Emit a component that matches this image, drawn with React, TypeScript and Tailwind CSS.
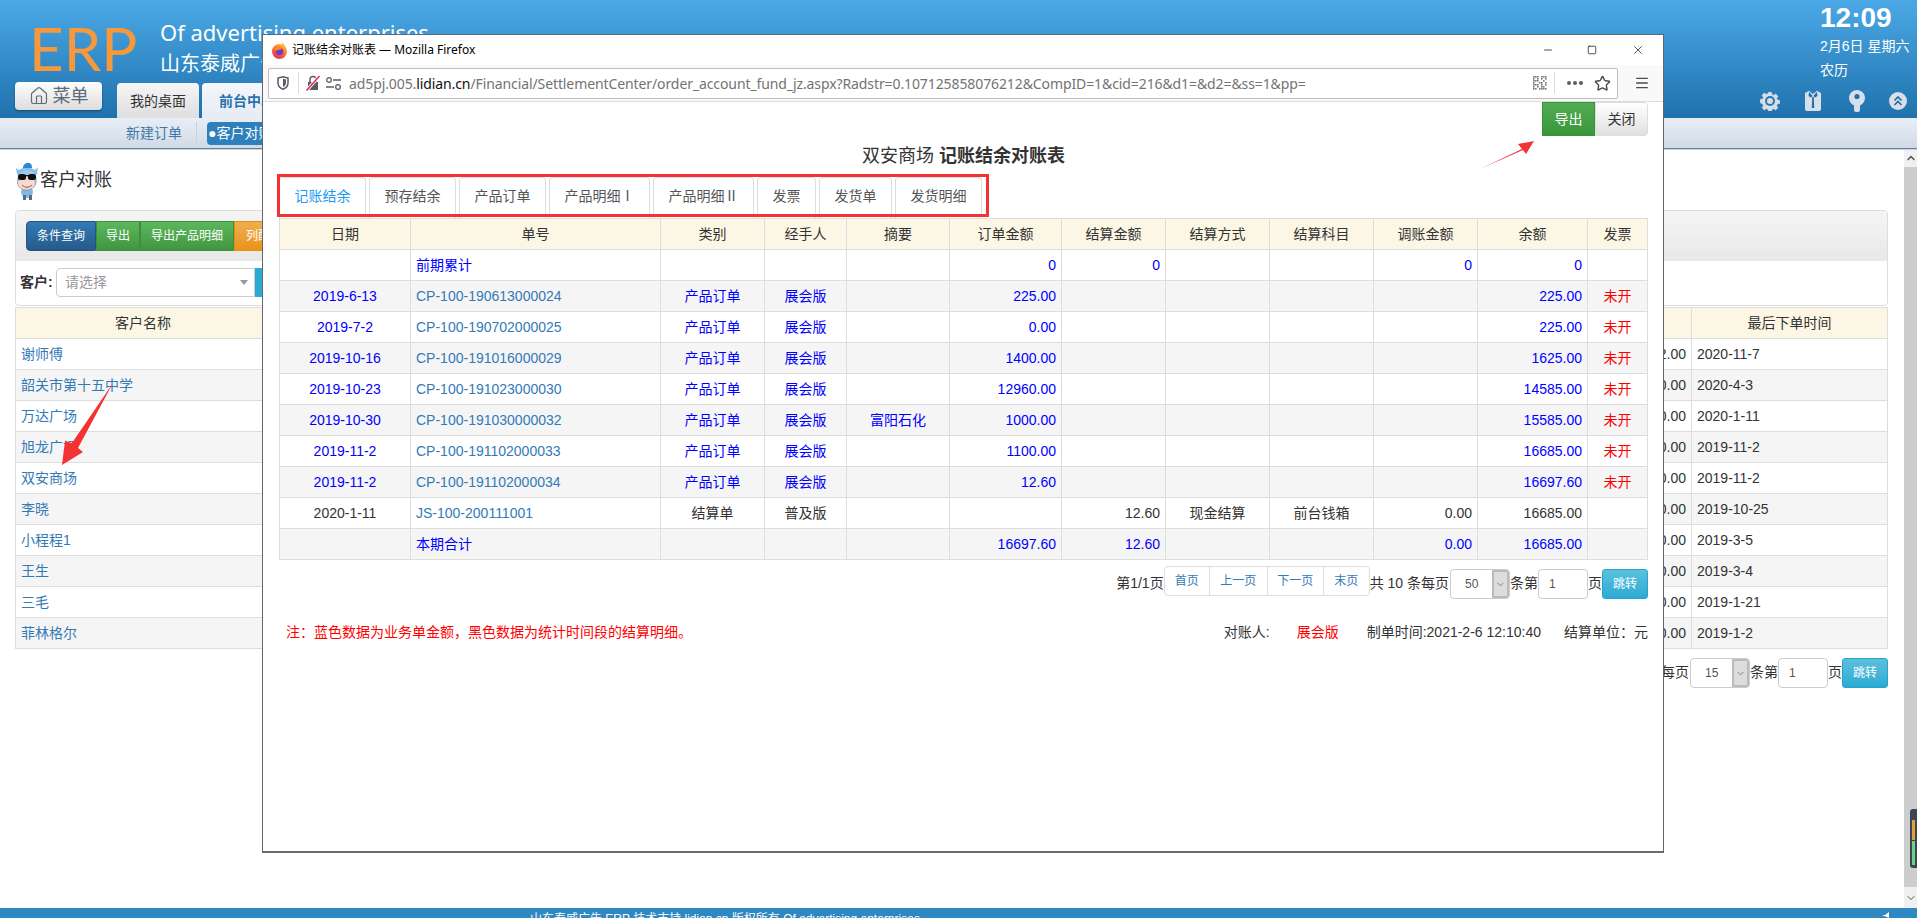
import React from "react";
import { ChevronDown, ChevronUp, Home, Minus, Square, X, Menu, Star } from "lucide-react";

const customers = [
  ["谢师傅", "12.00", "2020-11-7"],
  ["韶关市第十五中学", "0.00", "2020-4-3"],
  ["万达广场", "0.00", "2020-1-11"],
  ["旭龙广场", "0.00", "2019-11-2"],
  ["双安商场", "0.00", "2019-11-2"],
  ["李晓", "0.00", "2019-10-25"],
  ["小程程1", "0.00", "2019-3-5"],
  ["王生", "0.00", "2019-3-4"],
  ["三毛", "0.00", "2019-1-21"],
  ["菲林格尔", "0.00", "2019-1-2"],
];

type Row = {
  date?: string; no: string; kind?: string; who?: string; memo?: string; amt?: string; settle?: string;
  way?: string; subject?: string; adj?: string; bal?: string; inv?: string; black?: boolean; summary?: boolean;
};

const rows: Row[] = [
  { no: "前期累计", amt: "0", settle: "0", adj: "0", bal: "0", summary: true },
  { date: "2019-6-13", no: "CP-100-190613000024", kind: "产品订单", who: "展会版", amt: "225.00", bal: "225.00", inv: "未开" },
  { date: "2019-7-2", no: "CP-100-190702000025", kind: "产品订单", who: "展会版", amt: "0.00", bal: "225.00", inv: "未开" },
  { date: "2019-10-16", no: "CP-100-191016000029", kind: "产品订单", who: "展会版", amt: "1400.00", bal: "1625.00", inv: "未开" },
  { date: "2019-10-23", no: "CP-100-191023000030", kind: "产品订单", who: "展会版", amt: "12960.00", bal: "14585.00", inv: "未开" },
  { date: "2019-10-30", no: "CP-100-191030000032", kind: "产品订单", who: "展会版", memo: "富阳石化", amt: "1000.00", bal: "15585.00", inv: "未开" },
  { date: "2019-11-2", no: "CP-100-191102000033", kind: "产品订单", who: "展会版", amt: "1100.00", bal: "16685.00", inv: "未开" },
  { date: "2019-11-2", no: "CP-100-191102000034", kind: "产品订单", who: "展会版", amt: "12.60", bal: "16697.60", inv: "未开" },
  { date: "2020-1-11", no: "JS-100-200111001", kind: "结算单", who: "普及版", settle: "12.60", way: "现金结算", subject: "前台钱箱", adj: "0.00", bal: "16685.00", black: true },
  { no: "本期合计", amt: "16697.60", settle: "12.60", adj: "0.00", bal: "16685.00", summary: true },
];

const heads = ["日期", "单号", "类别", "经手人", "摘要", "订单金额", "结算金额", "结算方式", "结算科目", "调账金额", "余额", "发票"];
const widths = ["w-[131px]", "w-[250px]", "w-[104px]", "w-[82px]", "w-[103px]", "w-[112px]", "w-[104px]", "w-[104px]", "w-[104px]", "w-[104px]", "w-[110px]", "w-[60px]"];
const tabs = ["记账结余", "预存结余", "产品订单", "产品明细Ⅰ", "产品明细Ⅱ", "发票", "发货单", "发货明细"];

const cell = "border border-[#ddd] px-[5px] py-0 text-[14px] font-normal leading-[20px]";

function Pager({ size }: { size: string }) {
  return (
    <div className="mt-[6px] flex justify-end text-[14px] text-[#333]">
      <span className="mt-[7px] leading-[20px]">第1/1页</span>
      <div className="flex h-[30px] rounded-[4px] border border-[#ddd] bg-white text-[12px] leading-[28px] text-[#337ab7]">
        <span className="w-[45px] border-r border-[#ddd] text-center">首页</span>
        <span className="w-[58px] border-r border-[#ddd] text-center">上一页</span>
        <span className="w-[56px] border-r border-[#ddd] text-center">下一页</span>
        <span className="w-[45px] text-center">末页</span>
      </div>
      <span className="mt-[7px] leading-[20px]">共 10 条每页</span>
      <div className="ml-[1px] mt-[3px] flex h-[30px] w-[60px] overflow-hidden rounded-[4px] border border-[#ccc] bg-white text-[12px]">
        <span className="flex-1 pl-[14px] leading-[28px] text-[#555]">{size}</span>
        <span className="flex w-[17px] items-center justify-center border-2 border-[#bbb] bg-[#ddd] text-[#555]">
          <ChevronDown size={11} strokeWidth={1.5} />
        </span>
      </div>
      <span className="mt-[7px] leading-[20px]">条第</span>
      <div className="mt-[3px] h-[30px] w-[50px] rounded-[4px] border border-[#ccc] bg-white pl-[10px] text-[12px] leading-[28px] text-[#555]">1</div>
      <span className="mt-[7px] leading-[20px]">页</span>
      <div className="mt-[3px] h-[30px] w-[46px] rounded-[3px] border border-[#28a4c9] bg-gradient-to-b from-[#5bc0de] to-[#2aabd2] text-center text-[12px] leading-[28px] text-white">跳转</div>
    </div>
  );
}

function Gear() {
  return (
    <svg width="20" height="20" viewBox="0 0 20 20">
      <g fill="#d5dfea" stroke="#8aa4bd" strokeWidth="0.4">
        <path d="M8.3 1h3.4l.5 2.4 1.5.7 2.1-1.3 2.4 2.4-1.3 2.1.6 1.5 2.5.5v3.4l-2.5.5-.6 1.5 1.3 2.1-2.4 2.4-2.1-1.3-1.5.6-.5 2.5H8.3l-.5-2.5-1.5-.6-2.1 1.3-2.4-2.4 1.3-2.1-.6-1.5L0 11.7V8.3l2.5-.5.6-1.5-1.3-2.1 2.4-2.4 2.1 1.3 1.5-.7z" />
      </g>
      <circle cx="10" cy="10" r="5" fill="#2a76ad" />
      <circle cx="10" cy="10" r="3" fill="#d5dfea" />
    </svg>
  );
}
function Shirt() {
  return (
    <svg width="18" height="22" viewBox="0 0 18 22">
      <path d="M1 3l4-2 4 3 4-3 4 2v16a2 2 0 0 1-2 2H3a2 2 0 0 1-2-2z" fill="#d7e0ea" />
      <path d="M5 1l4 5 4-5 1 5-3 2-2-2-2 2-3-2z" fill="#1f6fa8" stroke="#d7e0ea" strokeWidth="0.8" />
      <path d="M8.2 7h1.6l.4 11H7.8z" fill="#1f6fa8" />
    </svg>
  );
}
function KeyIcon() {
  return (
    <svg width="16" height="22" viewBox="0 0 16 22">
      <path d="M8 0a8 8 0 0 1 3 15.4V20a2 2 0 0 1-2 2H7a2 2 0 0 1-2-2v-4.6A8 8 0 0 1 8 0z" fill="#d7e0ea" />
      <circle cx="8" cy="6.5" r="2.6" fill="#2070aa" />
    </svg>
  );
}
function ChevCircle() {
  return (
    <svg width="18" height="18" viewBox="0 0 18 18">
      <circle cx="9" cy="9" r="9" fill="#d7e0ea" />
      <path d="M5.5 8.5L9 5l3.500 3.500M5.500 13L9 9.500l3.500 3.500" fill="none" stroke="#22699d" strokeWidth="1.6" />
    </svg>
  );
}

function Mascot() {
  return (
    <svg width="24" height="38" viewBox="0 0 24 38">
      <ellipse cx="12" cy="30" rx="6" ry="6" fill="#7fb8e2" />
      <rect x="8" y="33" width="3" height="5" fill="#5a6a78" />
      <rect x="14" y="33" width="3" height="5" fill="#5a6a78" />
      <path d="M4 8l4-2 8 0 4 2 3-3-1 7-2 3H5l-3-3-1-6z" fill="#86bfe8" />
      <path d="M8 6c0-3 2-5 5-5s4 2 4 5z" fill="#2f86c8" />
      <ellipse cx="12" cy="18" rx="10" ry="10" fill="#9ccbec" />
      <ellipse cx="11.500" cy="21" rx="9" ry="7" fill="#f7d9cf" stroke="#777" strokeWidth="0.5" />
      <rect x="3" y="12" width="8" height="6" rx="2.500" fill="#111" />
      <rect x="13" y="12" width="8" height="6" rx="2.500" fill="#111" />
      <rect x="10" y="13" width="4" height="1.200" fill="#111" />
      <path d="M7 23c3 3 7 3 10 0" fill="none" stroke="#7a4a40" strokeWidth="0.900" />
    </svg>
  );
}

function Firefox() {
  return (
    <svg width="17" height="17" viewBox="0 0 17 17">
      <defs>
        <linearGradient id="ffa" x1="0.8" y1="0" x2="0.2" y2="1">
          <stop offset="0" stopColor="#ffc82d" />
          <stop offset="0.5" stopColor="#ff6a2b" />
          <stop offset="1" stopColor="#e5245e" />
        </linearGradient>
      </defs>
      <circle cx="8.500" cy="9.500" r="7.500" fill="url(#ffa)" />
      <path d="M11 0c1 2 3 3 4 6L11 5z" fill="#ffb52e" />
      <circle cx="8.500" cy="9.500" r="3.800" fill="#6f3bc9" />
      <path d="M3 7c2-2 5-2 8-1l-2 2c-2-.5-3 0-3 1z" fill="#ff8a1f" />
    </svg>
  );
}

function Qr() {
  const on = [0, 1, 2, 4, 5, 6, 7, 9, 11, 13, 14, 15, 16, 19, 21, 24, 25, 27, 28, 29, 30, 32, 34, 35, 37, 39, 40, 42, 43, 45, 46, 47, 48];
  return (
    <svg width="14" height="14" viewBox="0 0 14 14" fill="#7a7a7a">
      {on.map((i) => (
        <rect key={i} x={(i % 7) * 2} y={Math.floor(i / 7) * 2} width="1.600" height="1.600" />
      ))}
    </svg>
  );
}

function Modal() {
  return (
    <div className="absolute left-[262px] top-[34px] z-20 flex h-[819px] w-[1402px] flex-col border border-b-2 border-[#5f6870] border-b-[#6b6b6b] bg-white">
      <div className="flex h-[30px] shrink-0 items-center pl-[8px] text-[12px] text-black">
        <Firefox />
        <span className="ml-[4px] font-['Noto_Sans','Noto_Sans_CJK_SC',sans-serif]">记账结余对账表 — Mozilla Firefox</span>
        <div className="ml-auto flex items-center pr-[18px] text-black">
          <Minus size={12} strokeWidth={1.4} className="mr-[33px]" />
          <Square size={10} strokeWidth={1.6} className="mr-[34px]" />
          <X size={14} strokeWidth={1.1} />
        </div>
      </div>
      <div className="flex h-[37px] shrink-0 items-center border-b border-[#dcdcdc] bg-[#f9f9fa] pl-[5px] pr-[13px]">
        <div className="flex h-[31px] w-[1350px] items-center rounded-[2px] border border-[#bdbdbd] bg-white">
          <svg width="12" height="14" viewBox="0 0 12 14" className="ml-[8px]">
            <path d="M6 .8L11 2v5c0 3-2.200 5.200-5 6.200C3.200 12.200 1 10 1 7V2z" fill="none" stroke="#5b5b66" strokeWidth="1.500" />
            <path d="M6 2.800l3 .8v3.400c0 2-1.300 3.300-3 4z" fill="#5b5b66" />
          </svg>
          <div className="ml-[9px] h-[22px] w-px bg-[#ddd]" />
          <svg width="16" height="16" viewBox="0 0 16 16" className="ml-[6px]">
            <path d="M3 7h10v8H3z" fill="#5b5b66" />
            <path d="M5 7V4.500a3 3 0 0 1 6 0V7" fill="none" stroke="#5b5b66" strokeWidth="1.500" />
            <path d="M1.500 15.500L14.500 1" stroke="#fff" strokeWidth="3.200" />
            <path d="M1.500 15.500L14.500 1" stroke="#e22850" strokeWidth="1.500" />
          </svg>
          <svg width="15" height="13" viewBox="0 0 15 13" className="ml-[5px]">
            <circle cx="3" cy="3" r="2.300" fill="none" stroke="#5b5b66" strokeWidth="1.300" />
            <path d="M7 3h8M0 10h8" stroke="#5b5b66" strokeWidth="1.500" />
            <circle cx="12" cy="10" r="2.300" fill="none" stroke="#5b5b66" strokeWidth="1.300" />
          </svg>
          <span className="ml-[8px] whitespace-nowrap font-['Noto_Sans',sans-serif] text-[14px] tracking-[-0.1px] text-[#737373]">
            ad5pj.005.<span className="text-[#111]">lidian.cn</span>/Financial/SettlementCenter/order_account_fund_jz.aspx?Radstr=0.107125858076212&CompID=1&cid=216&d1=&d2=&ss=1&pp=
          </span>
          <div className="ml-auto flex items-center">
            <Qr />
            <div className="ml-[7px] h-[22px] w-px bg-[#ddd]" />
            <span className="ml-[12px] flex gap-[2px]">
              <i className="block h-[4px] w-[4px] rounded-full bg-[#5b5b66]" />
              <i className="block h-[4px] w-[4px] rounded-full bg-[#5b5b66]" />
              <i className="block h-[4px] w-[4px] rounded-full bg-[#5b5b66]" />
            </span>
            <Star size={17} strokeWidth={2} className="ml-[11px] mr-[6px] text-[#4a4a52]" />
          </div>
        </div>
        <Menu size={16} strokeWidth={2} className="ml-auto text-[#4a4a52]" />
      </div>

      <div className="relative flex-1 pl-[16px] pr-[15px]">
        <div className="flex h-[34px] justify-end text-[14px] leading-[32px]">
          <span className="h-[34px] w-[53px] border border-[#3a923a] bg-gradient-to-b from-[#52ad52] to-[#3a963a] text-center text-white">导出</span>
          <span className="h-[34px] w-[53px] rounded-r-[4px] border border-[#ddd] bg-gradient-to-b from-white to-[#e0e0e0] text-center text-[#333]">关闭</span>
        </div>
        <div className="mt-[8px] h-[24px] text-center text-[18px] leading-[24px] text-[#333]">
          双安商场 <b className="font-bold">记账结余对账表</b>
        </div>
        <div className="mt-[9px] flex h-[41px] gap-[3px] text-[14px] leading-[36px]">
          {tabs.map((t, i) => (
            <span key={t} className={`rounded-t-[4px] border border-b-0 border-[#ddd] px-[14.5px] ${i === 0 ? "text-[#1d9bf0]" : "text-[#555]"}`}>{t}</span>
          ))}
        </div>
        <table className="w-[1369px] table-fixed border-collapse text-[#333]">
          <colgroup>
            {widths.map((w, i) => <col key={i} className={w} />)}
          </colgroup>
          <thead>
            <tr className="h-[31px] bg-[#fcf7e5]">
              {heads.map((h) => <th key={h} className={`${cell} text-center`}>{h}</th>)}
            </tr>
          </thead>
          <tbody>
            {rows.map((r, i) => {
              const c = r.black ? "text-[#333]" : "text-[#0000ff]";
              return (
                <tr key={i} className={`h-[31px] ${i % 2 === 1 ? "bg-[#f5f5f5]" : "bg-white"}`}>
                  <td className={`${cell} text-center ${c}`}>{r.date}</td>
                  <td className={`${cell} text-left ${r.summary ? "text-[#0000ff]" : "text-[#337ab7]"}`}>{r.no}</td>
                  <td className={`${cell} text-center ${c}`}>{r.kind}</td>
                  <td className={`${cell} text-center ${c}`}>{r.who}</td>
                  <td className={`${cell} text-center ${c}`}>{r.memo}</td>
                  <td className={`${cell} text-right ${c}`}>{r.amt}</td>
                  <td className={`${cell} text-right ${c}`}>{r.settle}</td>
                  <td className={`${cell} text-center ${c}`}>{r.way}</td>
                  <td className={`${cell} text-center ${c}`}>{r.subject}</td>
                  <td className={`${cell} text-right ${c}`}>{r.adj}</td>
                  <td className={`${cell} text-right ${c}`}>{r.bal}</td>
                  <td className={`${cell} text-center text-[#ff0000]`}>{r.inv}</td>
                </tr>
              );
            })}
          </tbody>
        </table>
        <Pager size="50" />
        <div className="mt-[23px] flex h-[20px] pl-[7px] text-[14px] leading-[20px] text-[#333]">
          <span className="text-[#ff0000]">注：蓝色数据为业务单金额，黑色数据为统计时间段的结算明细。</span>
          <span className="ml-auto">对账人:</span>
          <span className="ml-[27px] text-[#ff0000]">展会版</span>
          <span className="ml-[28px]">制单时间:2021-2-6 12:10:40</span>
          <span className="ml-[23px]">结算单位：元</span>
        </div>

        <div className="pointer-events-none absolute left-[14px] top-[72px] h-[43px] w-[712px] border-[3px] border-[#f33333]" />
        <svg width="60" height="34" viewBox="0 0 60 34" className="absolute left-[1216px] top-[36px]">
          <polygon points="1,31 43,11 39,6 55,3 47,16 44,12" fill="#f33333" />
        </svg>
      </div>
    </div>
  );
}

export default function App() {
  return (
    <div className="relative flex h-[918px] w-[1917px] flex-col overflow-hidden bg-white font-['Liberation_Sans','Noto_Sans_CJK_SC',sans-serif] text-[14px] text-[#333]">
      {/* header */}
      <header className="relative flex h-[118px] shrink-0 bg-gradient-to-b from-[#4ba9e6] to-[#1e72ad] text-white">
        <div className="flex w-[160px] shrink-0 flex-col pl-[15px]">
          <div className="ml-[14px] mt-[14px] h-[68px] font-['Lato',sans-serif] text-[60px] leading-[68px] text-[#f7983b]">ERP</div>
          <div className="flex h-[36px] items-start">
            <div className="flex h-[28px] w-[87px] items-center justify-center gap-[4px] rounded-[4px] bg-gradient-to-b from-white to-[#dcdcdc] text-[18px] text-[#5f6b78] shadow-[0_1px_2px_rgba(0,0,0,0.4)]">
              <Home size={20} strokeWidth={1.4} />
              <span>菜单</span>
            </div>
          </div>
        </div>
        <div className="flex flex-1 flex-col">
          <div className="mt-[16px] font-['Noto_Sans',sans-serif] text-[22px] leading-[32px]">Of advertising enterprises</div>
          <div className="mt-[2px] text-[20px] leading-[28px]">山东泰威广告</div>
          <div className="ml-[-43px] mt-auto flex h-[35px] gap-[3px] text-[14px] leading-[36px]">
            <span className="w-[82px] rounded-t-[4px] bg-gradient-to-b from-[#f6f6f6] to-[#dedede] text-center text-[#333]">我的桌面</span>
            <span className="w-[90px] rounded-t-[4px] bg-gradient-to-b from-[#f4f7fb] to-[#e6ecf4] text-center font-bold text-[#2a72ad]">前台中心</span>
          </div>
        </div>
        <div className="absolute right-[7px] top-0 w-[90px]">
          <div className="mt-[2px] text-[28px] font-bold leading-[32px]">12:09</div>
          <div className="mt-[2px] whitespace-nowrap leading-[20px]">2月6日 星期六</div>
          <div className="mt-[4px] leading-[20px]">农历</div>
        </div>
        <div className="absolute right-[10px] top-[90px] flex items-center">
          <Gear />
          <span className="ml-[24px]"><Shirt /></span>
          <span className="ml-[27px]"><KeyIcon /></span>
          <span className="ml-[24px]"><ChevCircle /></span>
        </div>
      </header>

      {/* sub nav */}
      <nav className="relative z-10 flex h-[31px] shrink-0 items-center border-b border-[#6c7f92] bg-gradient-to-b from-[#e9eef6] to-[#cfdae7] shadow-[0_1px_0_#c4d3e6]">
        <span className="ml-[126px] text-[14px] text-[#3f78a6]">新建订单</span>
        <span className="ml-[14px] h-[22px] w-px bg-[#c9d3df]" />
        <span className="ml-[10px] h-[23px] w-[90px] rounded-[4px] bg-[#2e80bd] pl-[1px] text-[14px] leading-[23px] text-white">●客户对账</span>
      </nav>

      {/* body */}
      <div className="flex min-h-0 flex-1">
        <main className="min-w-0 flex-1 pl-[15px] pr-[16px] pt-[13px]">
          <div className="flex h-[37px] items-center">
            <Mascot />
            <span className="ml-[1px] text-[18px] text-[#333]">客户对账</span>
          </div>
          <section className="mt-[11px] rounded-[4px] border border-[#ddd]">
            <div className="h-[50px] rounded-t-[4px] bg-gradient-to-b from-[#f5f5f5] to-[#e8e8e8] pl-[10px] pt-[10px]">
              <div className="flex h-[30px] text-[12px] leading-[28px] text-white">
                <span className="w-[70px] rounded-l-[4px] border border-[#245580] bg-gradient-to-b from-[#337ab7] to-[#265a88] text-center">条件查询</span>
                <span className="w-[44px] border border-[#3e8f3e] bg-gradient-to-b from-[#5cb85c] to-[#419641] text-center">导出</span>
                <span className="w-[94px] border border-[#3e8f3e] bg-gradient-to-b from-[#5cb85c] to-[#419641] text-center">导出产品明细</span>
                <span className="w-[60px] rounded-r-[4px] border border-[#e38d13] bg-gradient-to-b from-[#f0ad4e] to-[#eb9316] text-center">列配置</span>
              </div>
            </div>
            <div className="flex h-[44px] items-start pl-[4px] pt-[7px]">
              <span className="mt-[4px] w-[36px] text-[14px] font-bold">客户:</span>
              <div className="flex h-[29px] w-[199px] items-center justify-between rounded-l-[4px] border border-[#ccc] pl-[8px] pr-[6px] text-[#999]">
                <span>请选择</span>
                <span className="h-0 w-0 border-x-[4px] border-t-[5px] border-x-transparent border-t-[#999]" />
              </div>
              <span className="h-[29px] w-[46px] rounded-r-[4px] bg-[#2aabd2] text-center text-[12px] leading-[29px] text-white">查询</span>
            </div>
          </section>
          <table className="mt-px w-full table-fixed border-collapse">
            <colgroup>
              <col className="w-[255px]" />
              <col className="w-[1421px]" />
              <col />
            </colgroup>
            <thead>
              <tr className="h-[31px] bg-[#fcf7e5]">
                <th className={`${cell} text-center`}>客户名称</th>
                <th className={cell} />
                <th className={`${cell} text-center`}>最后下单时间</th>
              </tr>
            </thead>
            <tbody>
              {customers.map((c, i) => (
                <tr key={c[0]} className={`h-[31px] ${i % 2 === 1 ? "bg-[#f5f5f5]" : "bg-white"}`}>
                  <td className={`${cell} text-[#337ab7]`}>{c[0]}</td>
                  <td className={`${cell} text-right`}>{c[1]}</td>
                  <td className={cell}>{c[2]}</td>
                </tr>
              ))}
            </tbody>
          </table>
          <Pager size="15" />
        </main>
        <aside className="flex w-[13px] shrink-0 flex-col bg-[#cdcdcd]">
          <div className="flex h-[18px] items-center justify-center bg-[#f0f0f0] text-[#555]">
            <ChevronUp size={12} strokeWidth={3} />
          </div>
          <div className="flex-1" />
          <div className="flex h-[21px] items-center justify-center bg-[#f0f0f0] text-[#555]">
            <ChevronDown size={12} strokeWidth={2} />
          </div>
        </aside>
      </div>

      {/* footer */}
      <footer className="relative h-[10px] shrink-0 overflow-hidden bg-[#2f88c1] pl-[530px] pt-[4px] text-[12px] leading-[14px] text-white">
        山东泰威广告 ERP 技术支持 lidian.cn 版权所有 Of advertising enterprises
        <svg width="10" height="6" viewBox="0 0 10 6" className="absolute right-[25px] top-[4px]">
          <path d="M0 3h3l4-3v6z" fill="#fff" />
        </svg>
      </footer>

      {/* volume widget at the screen edge */}
      <div className="absolute right-0 top-[809px] z-10 flex h-[59px] w-[7px] flex-col justify-end gap-px rounded-l-[3px] bg-[#3a4652] py-[3px] pl-[2px]">
        <i className="block h-[20px] w-[3px] bg-[#e0a040]" />
        <i className="block h-[24px] w-[3px] bg-[#6fcf8a]" />
      </div>

      {/* annotation arrow */}
      <svg width="60" height="90" viewBox="0 0 60 90" className="absolute left-[58px] top-[380px] z-10">
        <polygon points="55,3 14,63 7,61 4,85 25,72 20,68" fill="#f33333" />
      </svg>

      <Modal />
    </div>
  );
}
